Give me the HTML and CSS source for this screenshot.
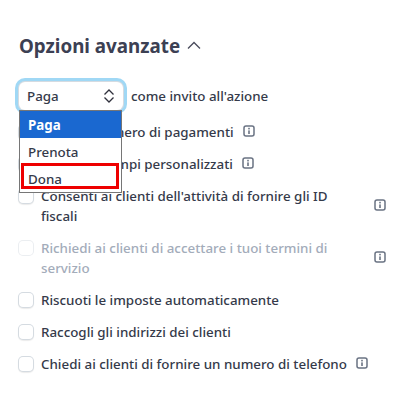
FILE: index.html
```html
<!DOCTYPE html>
<html lang="it">
<head>
    <meta charset="UTF-8">
    <title>Opzioni avanzate</title>
    <link rel="stylesheet" href="styles.css">
</head>
<body>

<div class="section">
    <h2>Opzioni avanzate
        <svg class="chevron" width="14" height="14" viewBox="0 0 14 14"><path d="M1 9.5l6-6 6 6" fill="none" stroke="#4a4c5c" stroke-width="1.3"/></svg>
    </h2>

    <div class="cta-row">
        <div class="select-wrap">
            <div class="select">
                <span>Paga</span>
                <svg width="12" height="16" viewBox="0 0 12 16"><path d="M1.5 6.5l4.5-4.5 4.5 4.5M1.5 9.5l4.5 4.5 4.5-4.5" fill="none" stroke="#30313d" stroke-width="1.3"/></svg>
            </div>
            <div class="dropdown">
                <div class="option selected">Paga</div>
                <div class="option">Prenota</div>
                <div class="option">Dona</div>
                <div class="highlight"></div>
            </div>
        </div>
        <span class="cta-text">come invito all'azione</span>
    </div>

    <div class="row">
        <span class="box"></span>
        <span class="text">Limita il numero di pagamenti</span>
        <svg class="info" viewBox="0 0 12 12"><use href="#info"/></svg>
    </div>
    <div class="row">
        <span class="box"></span>
        <span class="text">Aggiungi campi personalizzati</span>
        <svg class="info" viewBox="0 0 12 12"><use href="#info"/></svg>
    </div>
    <div class="row wide">
        <span class="box"></span>
        <span class="text">Consenti ai clienti dell'attività di fornire gli ID fiscali</span>
        <svg class="info" viewBox="0 0 12 12"><use href="#info"/></svg>
    </div>
    <div class="row wide disabled">
        <span class="box"></span>
        <span class="text">Richiedi ai clienti di accettare i tuoi termini di servizio</span>
        <svg class="info" viewBox="0 0 12 12"><use href="#info"/></svg>
    </div>
    <div class="row">
        <span class="box"></span>
        <span class="text">Riscuoti le imposte automaticamente</span>
    </div>
    <div class="row">
        <span class="box"></span>
        <span class="text">Raccogli gli indirizzi dei clienti</span>
    </div>
    <div class="row">
        <span class="box"></span>
        <span class="text">Chiedi ai clienti di fornire un numero di telefono</span>
        <svg class="info" viewBox="0 0 12 12"><use href="#info"/></svg>
    </div>
</div>

<svg width="0" height="0" class="defs">
    <symbol id="info" viewBox="0 0 12 12">
        <rect x="1" y="1" width="10" height="10" rx="2" fill="none" stroke="#6a7383" stroke-width="1.5"/>
        <rect x="5.2" y="2.8" width="1.6" height="1.6" fill="#6a7383"/>
        <rect x="5.2" y="5.4" width="1.6" height="3.6" fill="#6a7383"/>
    </symbol>
</svg>

</body>
</html>
```

FILE: styles.css
```css
body {
    margin: 0;
    background: #fff;
    font-family: "Noto Sans", Arial, sans-serif;
    font-size: 13.37px;
    font-weight: 500;
    line-height: 20px;
    color: #353a4a;
}
.section {
    padding: 32px 0 0 19px;
}
h2 {
    display: flex;
    align-items: center;
    gap: 7px;
    margin: 0 0 22px;
    font-size: 18.8px;
    line-height: 28px;
    font-weight: 700;
    color: #3c4053;
}
.cta-row {
    display: flex;
    align-items: center;
    gap: 8px;
    height: 28px;
    margin-bottom: 12px;
}
.select-wrap {
    position: relative;
    width: 104px;
}
.select {
    display: flex;
    align-items: center;
    justify-content: space-between;
    height: 28px;
    box-sizing: border-box;
    padding: 0 8px;
    background: #fff;
    border-radius: 6px;
    box-shadow: 0 0 0 1px #d5dbe1, 0 0 0 4px #a0d8f5;
}
.dropdown {
    position: absolute;
    top: 28px;
    left: 0;
    width: 103px;
    box-sizing: border-box;
    background: #fff;
    border: 1px solid #767676;
    z-index: 2;
}
.option {
    height: 27px;
    padding: 0 8px;
    line-height: 29px;
}
.option.selected {
    height: 27px;
    background: #1a68d0;
    color: #fff;
    font-weight: 700;
}
.highlight {
    position: absolute;
    left: 1px;
    top: 52px;
    width: 98px;
    height: 26px;
    box-sizing: border-box;
    border: 3px solid #ee0000;
}
.row {
    display: flex;
    align-items: flex-start;
    margin-bottom: 12px;
}
.box {
    flex: none;
    width: 14px;
    height: 14px;
    margin: 3px 8px 0 0;
    background: #fff;
    border-radius: 4px;
    box-shadow: 0 0 0 1px #d5dbe1, 0 1px 1px 1px rgba(0,0,0,0.08);
}
.info {
    flex: none;
    width: 12px;
    height: 12px;
    margin: 3px 0 0 9px;
}
.row.wide .text {
    width: 333px;
    box-sizing: border-box;
    padding-right: 16px;
}
.row.wide .info {
    margin: 13px 0 0 0;
}
.row.disabled .text {
    color: #a3acba;
}
.row.disabled .box {
    box-shadow: 0 0 0 1px #ebeef1;
}
.defs {
    position: absolute;
}
```
